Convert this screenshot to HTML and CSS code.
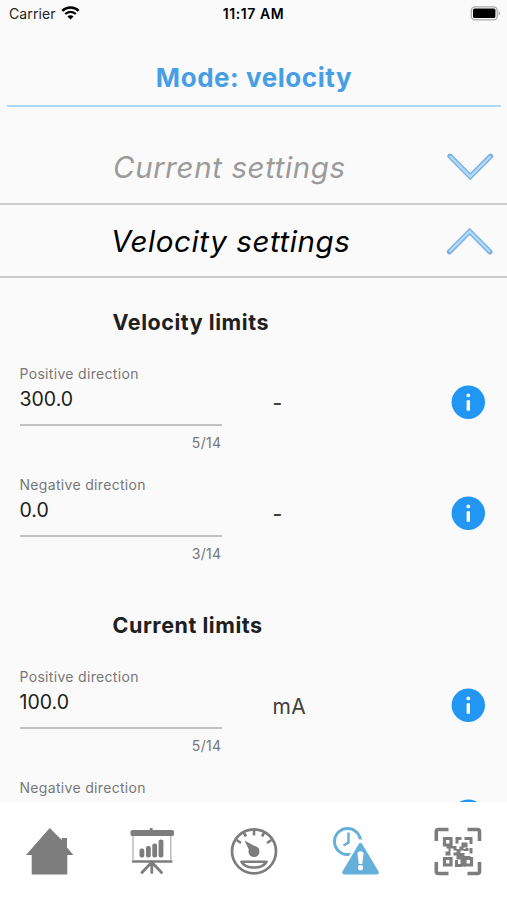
FILE: index.html
```html
<!DOCTYPE html>
<html lang="en">
<head>
<meta charset="utf-8">
<title>Mode: velocity</title>
<link rel="stylesheet" href="styles.css">
</head>
<body>
<svg width="0" height="0" class="defs">
  <symbol id="info" viewBox="0 0 34 34"><circle cx="17.300" cy="17.200" r="16.700" fill="#2196f3"/><circle cx="17.300" cy="10.400" r="1.900" fill="#fff"/><rect x="15.600" y="15.200" width="3.400" height="10.600" rx=".8" fill="#fff"/></symbol>
  <symbol id="chevron" viewBox="0 0 48 30"><path d="M4 4.200 24.300 24.500 44.600 4.200" fill="none" stroke="#7fb2e2" stroke-width="5.200" stroke-linecap="round"/><path d="M4 4.200 24.300 24.500 44.600 4.200" fill="none" stroke="#afdcfb" stroke-width="2.300"/></symbol>
</svg>
<div class="screen">
  <header class="status">
    <div class="carrier">Carrier
      <svg width="19" height="14" viewBox="0 0 18 14"><g fill="none" stroke="#000" stroke-width="2.3"><path d="M.8 4.900a11.600 11.600 0 0 1 16.400 0"/><path d="M3.700 8a7.500 7.500 0 0 1 10.600 0"/></g><path d="M9 13.600 5.900 10.500a4.400 4.400 0 0 1 6.200 0z"/></svg>
    </div>
    <div class="clock">11:17 AM</div>
    <svg class="battery" width="31" height="15" viewBox="0 0 31 15"><rect x="1.300" y=".8" width="25.900" height="13" rx="3.600" fill="#fafafa" stroke="#aaa" stroke-width="1.300"/><rect x="3" y="2.600" width="22.400" height="9.400" rx="1.600"/><path d="M28.600 4.800q3 2.400 0 4.800z" fill="#aaa"/></svg>
  </header>
  <h1 class="mode"><span>Mode: velocity</span></h1>
  <div class="row closed"><span>Current settings</span><svg width="48" height="30"><use href="#chevron"/></svg></div>
  <div class="row open"><span>Velocity settings</span><svg class="up" width="48" height="30"><use href="#chevron"/></svg></div>
  <main class="content">
    <section>
      <h2>Velocity limits</h2>
      <div class="field"><div class="input"><label>Positive direction</label><div class="value">300.0</div><div class="count">5/14</div></div><div class="unit dash">-</div><svg class="info" width="34" height="34"><use href="#info"/></svg></div>
      <div class="field"><div class="input"><label>Negative direction</label><div class="value">0.0</div><div class="count">3/14</div></div><div class="unit dash">-</div><svg class="info" width="34" height="34"><use href="#info"/></svg></div>
    </section>
    <section>
      <h2>Current limits</h2>
      <div class="field"><div class="input"><label>Positive direction</label><div class="value">100.0</div><div class="count">5/14</div></div><div class="unit">mA</div><svg class="info" width="34" height="34"><use href="#info"/></svg></div>
      <div class="field"><div class="input"><label>Negative direction</label></div><div class="unit"></div><svg class="info" width="34" height="34"><use href="#info"/></svg></div>
    </section>
  </main>
  <nav class="tabs">
    <svg width="50" height="50" viewBox="0 0 50 50" fill="#7d7d7d"><path d="M24.700 2 36.800 14V12H42v9.500l6.300 7.500H42.300V48.500H6.700V29H1z"/></svg>
    <svg width="50" height="50" viewBox="0 0 50 50" fill="#7d7d7d"><path d="M22.800 2h2.800v2H45q2 0 2 1.500v3q0 1.500-2 1.500H5.500q-2 0-2-1.500v-3Q3.500 4 5.500 4h17.300z"/><path d="M6 10v24M43.800 10v24" stroke="#b3b3b3" stroke-width="1.300"/><rect x="4.800" y="34.200" width="40.700" height="2.500" rx="1"/><g stroke="#7d7d7d" stroke-width="2.800" stroke-linecap="round"><path d="M24.800 36v10.500M23.500 37.500l-8.500 9M26 37.500l8.500 9"/></g><rect x="12.500" y="22.500" width="4.800" height="9" rx="2"/><rect x="19" y="20" width="4.800" height="11.500" rx="2"/><rect x="25.300" y="17.500" width="4.800" height="14" rx="2"/><rect x="31.600" y="13.500" width="4.800" height="18" rx="2"/></svg>
    <svg width="50" height="50" viewBox="0 0 50 50" fill="none" stroke="#7d7d7d"><circle cx="25" cy="25.300" r="22" stroke-width="2.700"/><g stroke-width="2.600"><path d="M25 3v6.500M14.500 6l2.500 4.500M35.500 6l-2.500 4.500M7.500 14l4.500 3M42.500 14l-4.500 3"/></g><circle cx="25" cy="25.500" r="5.500" fill="#7d7d7d" stroke="none"/><path d="M15.500 14.500 27.500 21l-6 6z" fill="#7d7d7d" stroke="none"/><path d="M12.500 35.800h25q-3 5.700-12.500 5.700t-12.500-5.700z" stroke-width="2.600" stroke-linejoin="round"/></svg>
    <svg width="50" height="50" viewBox="0 0 50 50" fill="#64b0db"><circle cx="16.500" cy="15.500" r="13" fill="none" stroke="#64b0db" stroke-width="3"/><path d="M17.500 6.500V16.500l-5 3" fill="none" stroke="#64b0db" stroke-width="2.500"/><path d="M29.500 17 46 46H13z" stroke="#fff" stroke-width="7" stroke-linejoin="round"/><path d="M29.500 19 45.800 46.500H13.200z" stroke="#64b0db" stroke-width="4" stroke-linejoin="round"/><path d="M26.500 28q0-2.800 3-2.800t3 2.800L31.200 38h-3.400z" fill="#fff"/><circle cx="29.500" cy="41.700" r="2.600" fill="#fff"/></svg>
    <svg width="50" height="50" viewBox="0 0 50 50" fill="#7d7d7d"><g fill="none" stroke="#7d7d7d" stroke-width="3.600"><path d="M3.300 15V5.500q0-2 2-2H15.500M34.500 3.500H44.500q2 0 2 2V15M3.300 36v9.500q0 2 2 2H15.500M34.500 47.500h10q2 0 2-2V36"/></g><g fill="none" stroke="#7d7d7d" stroke-width="3.200"><path d="M11.500 12.500h6.500v6.500h-6.500zM11.500 32.500h6.500v6.500h-6.500zM32 32.500h6.500v6.500h-6.500z"/></g><path d="M22.500 11h6v3h-3v3.500h-3zM31.500 11h8v7h-3v-4h-5zM28.500 16.500h6v5h-4v3h-4v-4h2zM18.500 20h5v3h4v4h4v3h6v2.500h-5v8h-5v-7h-4v-4h-3v-3h3v-2h-3v-2h-3v7h-5v-4h3v-3h-2v-3h5zM36.500 22h3v5.500h-3zM32.500 22h3v3h-5v-2h2zM22 34h3v4h4v3h-7z"/></svg>
  </nav>
</div>
</body>
</html>
```
FILE: styles.css
```css
* { box-sizing: border-box; }
body { margin: 0; background: #fafafa; color: #202020; font-family: Inter, "Liberation Sans", sans-serif; }
.defs { display: block; }
.screen { display: flex; flex-direction: column; width: 507px; height: 900px; overflow: hidden; }
.status { display: grid; grid-template-columns: 1fr auto 1fr; align-items: center; height: 28px; padding: 0 6px 0 9px; flex: none; color: #222; font-size: 14px; }
.carrier { display: flex; align-items: center; gap: 5px; margin-top: -2px; letter-spacing: .1px; }
.clock { margin-top: -1px; padding-right: 3px; font-weight: 600; color: #000; font-size: 14px; letter-spacing: .6px; }
.battery { justify-self: end; margin-top: -2px; }
.mode { display: flex; justify-content: center; align-items: center; flex: none; height: 79px; margin: 0 6px 0 7px; padding-top: 23px; border-bottom: 2px solid #b0d8f8; color: #469fe6; font-size: 26px; line-height: 32px; font-weight: 700; letter-spacing: .55px; }
.row { display: grid; grid-template-columns: 1fr 48px; align-items: center; flex: none; padding: 0 13px 0 113px; border-bottom: 2px solid #cbcbcb; font-size: 29.500px; letter-spacing: .6px; font-style: italic; font-weight: 400; white-space: nowrap; }
.closed { height: 98px; padding-top: 24px; color: #9b9b9b; }
.open { height: 73px; padding-left: 111px; padding-top: 1px; color: #000; }
.up { transform: rotate(180deg); }
.content { flex: 1; min-height: 0; overflow: hidden; }
section { height: 303px; padding-top: 29px; }
h2 { margin: 0 0 28px; padding-left: 112.500px; font-size: 21.500px; line-height: 30px; font-weight: 700; letter-spacing: .55px; }
.field { display: grid; grid-template-columns: 202px 1fr 34px; height: 111px; padding: 0 22px 0 19.500px; }
.input label { display: block; height: 18px; line-height: 18px; font-size: 14px; letter-spacing: .32px; color: #777; }
.value { height: 43px; padding-top: 3px; line-height: 26px; font-size: 19.500px; border-bottom: 2px solid #c2c2c2; }
.count { margin-top: 8px; text-align: right; font-size: 14px; line-height: 18px; letter-spacing: .35px; color: #777; }
.unit { padding-left: 51px; margin-top: 25px; line-height: 28px; font-size: 21px; letter-spacing: .3px; color: #404040; }
.dash { margin-top: 24px; font-weight: 500; }
.info { margin-top: 20px; }
.tabs { display: flex; justify-content: space-between; flex: none; height: 98px; padding: 24px 24px 0 24.500px; background: #fff; }
```
